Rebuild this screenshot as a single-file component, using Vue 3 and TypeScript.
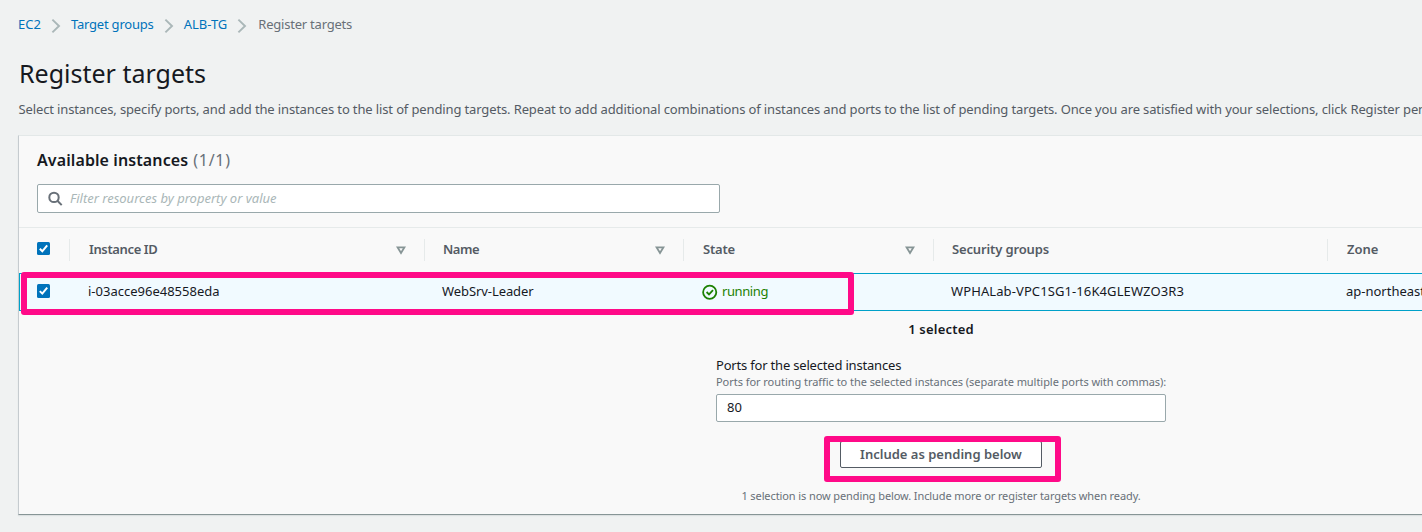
<script setup lang="ts">
import { ref } from 'vue'

interface Column {
  label: string
  sortable: boolean
}

const crumbs: string[] = ['EC2', 'Target groups', 'ALB-TG']
const columns: Column[] = [
  { label: 'Instance ID', sortable: true },
  { label: 'Name', sortable: true },
  { label: 'State', sortable: true },
  { label: 'Security groups', sortable: false },
  { label: 'Zone', sortable: false },
]
const ports = ref('80')
const filter = ref('')
</script>

<template>
  <main class="page">
    <nav class="crumbs">
      <template v-for="(crumb, i) in crumbs" :key="crumb">
        <a :class="'crumb c' + i">{{ crumb }}</a>
        <svg class="chevron" width="10" height="16" viewBox="0 0 10 16"><path d="M1.4 1.6 8 8 1.4 14.4" fill="none" stroke="#aab7b8" stroke-width="1.9" /></svg>
      </template>
      <span class="crumb here">Register targets</span>
    </nav>
    <h1>Register targets</h1>
    <p class="intro">Select instances, specify ports, and add the instances to the list of pending targets. Repeat to add additional combinations of instances and ports to the list of pending targets. Once you are satisfied with your selections, click Register pen</p>

    <section class="panel">
      <h2><span class="h2-title">Available instances</span><span class="count">(1/1)</span></h2>
      <div class="search">
        <svg width="16" height="16" viewBox="0 0 16 16" fill="none" stroke="#687078" stroke-width="2"><circle cx="6" cy="6.4" r="4.7" /><path d="m9.4 9.8 4.3 4.3" /></svg>
        <input v-model="filter" placeholder="Filter resources by property or value">
      </div>

      <div class="grid head">
        <div class="check"><svg width="13" height="13" viewBox="0 0 13 13"><rect width="13" height="13" rx="1.5" fill="#0073bb" /><path d="m2.8 6.8 2.5 2.5 4.9-6" fill="none" stroke="#fff" stroke-width="2" /></svg></div>
        <div v-for="(col, i) in columns" :key="col.label" class="th">
          <span :class="'t' + i">{{ col.label }}</span>
          <svg v-if="col.sortable" width="10" height="9" viewBox="0 0 10 9"><path d="M1.6 1.4h6.8L5 7Z" fill="none" stroke="#879596" stroke-width="1.9" /></svg>
        </div>
      </div>
      <div class="grid row">
        <div class="check"><svg width="13" height="14" viewBox="0 0 13 14"><rect width="13" height="14" rx="1.5" fill="#0073bb" /><path d="m2.8 7.1 2.5 2.5 4.9-6" fill="none" stroke="#fff" stroke-width="2" /></svg></div>
        <div class="td"><span class="id">i-03acce96e48558eda</span></div>
        <div class="td"><span class="name">WebSrv-Leader</span></div>
        <div class="td state">
          <svg width="16" height="16" viewBox="0 0 16 16" fill="none" stroke="#1d8102" stroke-width="1.8"><circle cx="7.7" cy="8.2" r="6.6" /><path d="m4.6 8 2.4 2.4 4-4.2" /></svg>
          <span class="running">running</span>
        </div>
        <div class="td"><span class="sg">WPHALab-VPC1SG1-16K4GLEWZO3R3</span></div>
        <div class="td"><span class="zone">ap-northeast</span></div>
        <div class="mark mark-row"></div>
      </div>

      <div class="form">
        <strong class="selected">1 selected</strong>
        <div class="field">
          <label for="ports">Ports for the selected instances</label>
          <small>Ports for routing traffic to the selected instances (separate multiple ports with commas):</small>
          <input id="ports" v-model="ports">
        </div>
        <div class="action">
          <button>Include as pending below</button>
          <div class="mark mark-button"></div>
        </div>
        <small class="note">1 selection is now pending below. Include more or register targets when ready.</small>
      </div>
    </section>
  </main>
</template>

<style>
body {
  background: #f0f2f2;
  overflow: hidden;
}
</style>

<style scoped>
.page {
  box-sizing: border-box;
  width: 1422px;
  height: 532px;
  overflow: hidden;
  padding: 13px 0 0 18px;
  background: #f0f2f2;
  color: #16191f;
  font: 13px/20px "Noto Sans", sans-serif;
  white-space: nowrap;
}
.crumbs {
  display: flex;
  align-items: center;
  height: 22px;
  color: #0073bb;
}
.c1 {
  letter-spacing: -0.2px;
}
.chevron {
  flex: none;
  margin: 3px 10px 0 10px;
}
.here {
  color: #687078;
  margin-left: 1px;
  letter-spacing: -0.22px;
}
h1 {
  margin: 20px 0 0 1px;
  font-size: 25px;
  font-weight: 400;
  line-height: 36px;
}
.intro {
  margin: 8px 0 0 0.5px;
  line-height: 20px;
  letter-spacing: -0.131px;
  color: #545b64;
}
.panel {
  box-sizing: border-box;
  width: 1440px;
  height: 380px;
  margin-top: 16px;
  border-top: 1px solid #e3e8e8;
  border-left: 1px solid #c5cbcf;
  border-bottom: 1px solid #879596;
  background: #f9f9f9;
  box-shadow: 0 1px 1px #dde1e2;
}
h2 {
  margin: 12px 0 0 18px;
  font-size: 16px;
  line-height: 24px;
}
.h2-title {
  font-weight: 600;
  letter-spacing: 0.1px;
}
.count {
  margin-left: 5px;
  color: #687078;
  font-weight: 400;
  letter-spacing: 0.75px;
}
.search {
  display: flex;
  align-items: center;
  box-sizing: border-box;
  width: 683px;
  height: 29px;
  margin: 12px 0 14px 18px;
  padding-left: 10px;
  border: 1px solid #99a8ab;
  border-radius: 2px;
  background: #fff;
}
.search input {
  flex: 1;
  margin-left: 6px;
  padding: 0 0 2px;
  border: 0;
  outline: 0;
  font: italic 13px/20px "Noto Sans", sans-serif;
}
.search input::placeholder {
  color: #aab7b8;
}
.grid {
  display: grid;
  grid-template-columns: 50px 355px 259px 250px 394px 1fr;
  align-items: center;
  box-sizing: border-box;
}
.check {
  display: flex;
  padding-left: 18px;
}
.head {
  height: 46px;
  border-top: 1px solid #e6eaea;
  color: #545b64;
  font-weight: 600;
}
.head .check {
  margin-top: -4px;
}
.th {
  display: flex;
  align-items: center;
  justify-content: space-between;
  height: 22px;
  margin-top: -1px;
  padding: 0 18px 0 19px;
  border-left: 1px solid #e6eaea;
}
.th span {
  padding-bottom: 2px;
}
.t0 {
  letter-spacing: -0.37px;
}
.t1 {
  margin-left: -1px;
  letter-spacing: -0.45px;
}
.t2 {
  letter-spacing: -0.2px;
}
.t3 {
  margin-left: -1px;
  letter-spacing: -0.14px;
}
.row {
  position: relative;
  height: 38px;
  border: 1px solid #00a1c9;
  border-right: 0;
  background: #f1faff;
}
.row .check {
  padding-left: 17px;
  margin-top: -2px;
}
.td {
  display: flex;
  align-items: center;
  padding-left: 18px;
}
.row .td {
  margin-top: -1px;
}
.td span {
  padding-bottom: 2px;
}
.name {
  margin-left: -1px;
  letter-spacing: -0.08px;
}
.state {
  gap: 4px;
  color: #1d8102;
}
.running {
  letter-spacing: -0.4px;
}
.sg {
  margin-left: -1px;
  letter-spacing: 0.1px;
}
.mark {
  position: absolute;
  box-sizing: border-box;
  border: 6px solid #ff0a88;
  border-radius: 3px;
}
.mark-row {
  left: 1px;
  top: -2px;
  width: 833px;
  height: 43px;
}
.mark-button {
  left: -16px;
  top: -5px;
  width: 237px;
  height: 46px;
}
.form {
  display: flex;
  flex-direction: column;
  align-items: center;
  width: 1844px;
}
.selected {
  margin-top: 8px;
  font-weight: 600;
  letter-spacing: 0.2px;
}
.field {
  display: flex;
  flex-direction: column;
  width: 450px;
  margin-top: 16px;
}
.field label {
  line-height: 20px;
  letter-spacing: -0.19px;
}
small {
  color: #687078;
  font-size: 11px;
  line-height: 14px;
  letter-spacing: -0.045px;
}
.field input {
  box-sizing: border-box;
  height: 28px;
  margin-top: 5px;
  padding: 0 10px 2px;
  border: 1px solid #99a8ab;
  border-radius: 2px;
  outline: 0;
  background: #fff;
  color: #16191f;
  font: 13px/20px "Noto Sans", sans-serif;
}
.action {
  position: relative;
  margin-top: 19px;
}
button {
  display: block;
  box-sizing: border-box;
  width: 202px;
  height: 27px;
  padding: 0 0 2px;
  border: 1px solid #545b64;
  border-radius: 2px;
  background: #fff;
  color: #545b64;
  font: 600 13px/20px "Noto Sans", sans-serif;
}
.note {
  margin-top: 21px;
  letter-spacing: -0.1px;
}
</style>
